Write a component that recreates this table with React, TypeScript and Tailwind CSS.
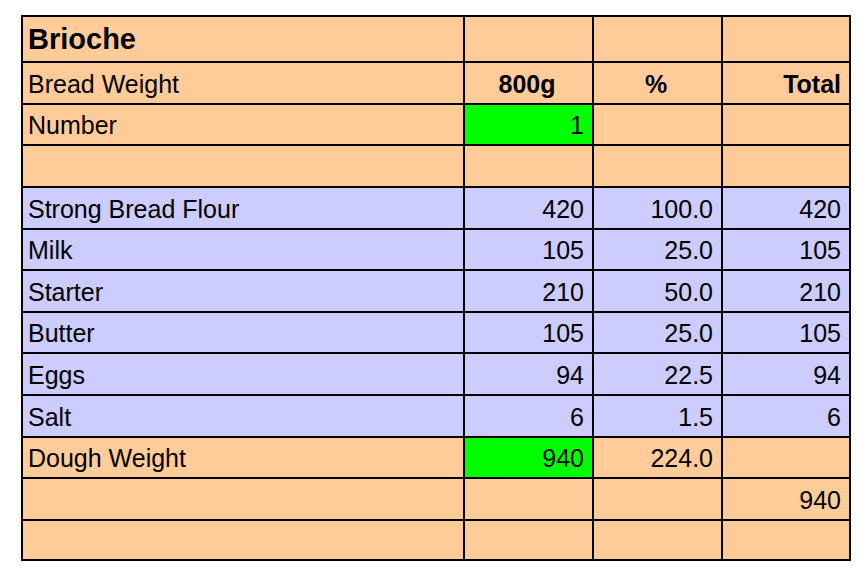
import React from "react";

type Cell = { text?: string; align?: "left" | "right" | "center"; bold?: boolean; bg?: string; big?: boolean };

const P = "bg-[#ffcc99]";
const L = "bg-[#ccccff]";
const G = "bg-[#00ff00]";

const rows: { bg: string; cells: Cell[] }[] = [
  { bg: P, cells: [{ text: "Brioche", bold: true, big: true }, {}, {}, {}] },
  {
    bg: P,
    cells: [
      { text: "Bread Weight" },
      { text: "800g", bold: true, align: "center" },
      { text: "%", bold: true, align: "center" },
      { text: "Total", bold: true, align: "right" },
    ],
  },
  { bg: P, cells: [{ text: "Number" }, { text: "1", align: "right", bg: G }, {}, {}] },
  { bg: P, cells: [{}, {}, {}, {}] },
  { bg: L, cells: [{ text: "Strong Bread Flour" }, { text: "420", align: "right" }, { text: "100.0", align: "right" }, { text: "420", align: "right" }] },
  { bg: L, cells: [{ text: "Milk" }, { text: "105", align: "right" }, { text: "25.0", align: "right" }, { text: "105", align: "right" }] },
  { bg: L, cells: [{ text: "Starter" }, { text: "210", align: "right" }, { text: "50.0", align: "right" }, { text: "210", align: "right" }] },
  { bg: L, cells: [{ text: "Butter" }, { text: "105", align: "right" }, { text: "25.0", align: "right" }, { text: "105", align: "right" }] },
  { bg: L, cells: [{ text: "Eggs" }, { text: "94", align: "right" }, { text: "22.5", align: "right" }, { text: "94", align: "right" }] },
  { bg: L, cells: [{ text: "Salt" }, { text: "6", align: "right" }, { text: "1.5", align: "right" }, { text: "6", align: "right" }] },
  { bg: P, cells: [{ text: "Dough Weight" }, { text: "940", align: "right", bg: G }, { text: "224.0", align: "right" }, {}] },
  { bg: P, cells: [{}, {}, {}, { text: "940", align: "right" }] },
  { bg: P, cells: [{}, {}, {}, {}] },
];

export default function App() {
  return (
    <div className="w-[868px] h-[576px] bg-white overflow-hidden pt-[15px] pl-[21px]" style={{ fontFamily: '"Liberation Sans", Arial, sans-serif' }}>
      <div className="grid grid-cols-[442px_129px_129px_128px] grid-rows-[46px_42px_41px_42px_42px_41px_42px_41px_42px_42px_41px_42px_40px] w-fit border-l-2 border-t-2 border-black text-black">
        {rows.map((r, ri) =>
          r.cells.map((c, ci) => {
            const al = c.align === "right" ? "justify-end pr-[8px]" : c.align === "center" ? "justify-center pr-[3px]" : "justify-start pl-[5px]";
            return (
              <div
                key={`${ri}-${ci}`}
                className={`box-border border-r-2 border-b-2 border-black flex items-center ${c.big ? "pt-0" : "pt-[2px]"} ${al} ${c.bg ?? r.bg} ${c.bold ? "font-bold" : ""} ${c.big ? "text-[29px]" : "text-[25px]"} leading-none whitespace-nowrap`}
              >
                {c.text ?? ""}
              </div>
            );
          })
        )}
      </div>
    </div>
  );
}
